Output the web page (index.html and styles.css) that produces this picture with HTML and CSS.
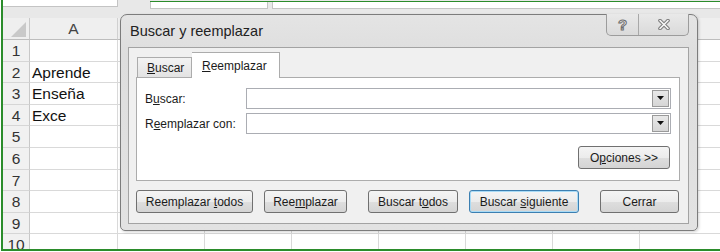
FILE: index.html
```html
<!DOCTYPE html>
<html lang="es">
<head>
    <meta charset="UTF-8">
    <title>Buscar y reemplazar</title>
    <link rel="stylesheet" href="styles.css">
</head>
<body>
    <div class="excel">
        <!-- name box / formula bar strip -->
        <div class="topbar">
            <div class="namebox"></div>
            <div class="formula-row">
                <div class="fx-box"></div>
                <div class="formula-box"></div>
            </div>
        </div>

        <!-- worksheet grid -->
        <div class="sheet">
            <div class="corner">
                <svg width="15" height="15" viewBox="0 0 15 15"><polygon points="15,0 15,15 0,15" fill="#c9c9c9"/></svg>
            </div>
            <div class="colhead">A</div><div class="colhead"></div><div class="colhead"></div><div class="colhead"></div><div class="colhead"></div><div class="colhead"></div><div class="colhead"></div><div class="colhead"></div>

            <div class="rowhead">1</div><div class="cell"></div><div class="cell"></div><div class="cell"></div><div class="cell"></div><div class="cell"></div><div class="cell"></div><div class="cell"></div><div class="cell"></div>
            <div class="rowhead">2</div><div class="cell">Aprende</div><div class="cell"></div><div class="cell"></div><div class="cell"></div><div class="cell"></div><div class="cell"></div><div class="cell"></div><div class="cell"></div>
            <div class="rowhead">3</div><div class="cell">Enseña</div><div class="cell"></div><div class="cell"></div><div class="cell"></div><div class="cell"></div><div class="cell"></div><div class="cell"></div><div class="cell"></div>
            <div class="rowhead">4</div><div class="cell">Exce</div><div class="cell"></div><div class="cell"></div><div class="cell"></div><div class="cell"></div><div class="cell"></div><div class="cell"></div><div class="cell"></div>
            <div class="rowhead">5</div><div class="cell"></div><div class="cell"></div><div class="cell"></div><div class="cell"></div><div class="cell"></div><div class="cell"></div><div class="cell"></div><div class="cell"></div>
            <div class="rowhead">6</div><div class="cell"></div><div class="cell"></div><div class="cell"></div><div class="cell"></div><div class="cell"></div><div class="cell"></div><div class="cell"></div><div class="cell"></div>
            <div class="rowhead">7</div><div class="cell"></div><div class="cell"></div><div class="cell"></div><div class="cell"></div><div class="cell"></div><div class="cell"></div><div class="cell"></div><div class="cell"></div>
            <div class="rowhead">8</div><div class="cell"></div><div class="cell"></div><div class="cell"></div><div class="cell"></div><div class="cell"></div><div class="cell"></div><div class="cell"></div><div class="cell"></div>
            <div class="rowhead">9</div><div class="cell"></div><div class="cell"></div><div class="cell"></div><div class="cell"></div><div class="cell"></div><div class="cell"></div><div class="cell"></div><div class="cell"></div>
            <div class="rowhead">10</div><div class="cell"></div><div class="cell"></div><div class="cell"></div><div class="cell"></div><div class="cell"></div><div class="cell"></div><div class="cell"></div><div class="cell"></div>
        </div>

        <!-- Buscar y reemplazar dialog -->
        <div class="dialog">
            <div class="titlebar">Buscar y reemplazar</div>
            <div class="caption-btns">
                <div class="cap-help">?</div>
                <div class="cap-close">
                    <svg width="12" height="11" viewBox="0 0 12 11">
                        <path d="M2 1.5 L10 9.5 M10 1.5 L2 9.5" stroke="#7a7a7a" stroke-width="3.6" stroke-linecap="round"/>
                        <path d="M2 1.5 L10 9.5 M10 1.5 L2 9.5" stroke="#f7f7f7" stroke-width="1.6" stroke-linecap="round"/>
                    </svg>
                </div>
            </div>

            <div class="inner">
                <div class="tabs">
                    <div class="tab"><u>B</u>uscar</div>
                    <div class="tab active"><u>R</u>eemplazar</div>
                </div>
                <div class="tab-panel">
                    <div class="field">
                        <label>B<u>u</u>scar:</label>
                        <div class="combo"><span class="drop"><svg width="7" height="5" viewBox="0 0 7 5"><polygon points="0,0 7,0 3.5,4" fill="#111"/></svg></span></div>
                    </div>
                    <div class="field">
                        <label>R<u>e</u>emplazar con:</label>
                        <div class="combo"><span class="drop"><svg width="7" height="5" viewBox="0 0 7 5"><polygon points="0,0 7,0 3.5,4" fill="#111"/></svg></span></div>
                    </div>
                    <div class="options-row">
                        <button class="btn btn-options">O<u>p</u>ciones &gt;&gt;</button>
                    </div>
                </div>
                <div class="actions">
                    <button class="btn w-todos">Reemplazar <u>t</u>odos</button>
                    <button class="btn w-reemp">Ree<u>m</u>plazar</button>
                    <button class="btn w-btodos wide-gap">Buscar t<u>o</u>dos</button>
                    <button class="btn btn-default w-sig">Buscar <u>s</u>iguiente</button>
                    <button class="btn w-cerrar wide-gap">Cerrar</button>
                </div>
            </div>
        </div>
    </div>
</body>
</html>
```

FILE: styles.css
```css
body {
    margin: 0;
    font-family: "Liberation Sans", Arial, sans-serif;
    background: #fff;
}
.excel {
    position: relative;
    width: 719px;
    height: 251px;
    margin-left: 1px;
    box-sizing: border-box;
    border-left: 2px solid #2b8c2b;
    border-bottom: 2px solid #2b8c2b;
    overflow: hidden;
    background: #fff;
}

/* top strip */
.topbar {
    display: flex;
    height: 18px;
    background: #e8e8e8;
}
.namebox {
    width: 115px;
    height: 7px;
    box-sizing: border-box;
    background: #fff;
    border-right: 1px solid #c4c4c4;
    border-bottom: 1px solid #c4c4c4;
}
.formula-row {
    flex: 1;
    display: flex;
    height: 7px;
    margin-left: 32px;
    margin-top: 1px;
    border-top: 1px solid #2b8c2b;
}
.fx-box {
    width: 118px;
    box-sizing: border-box;
    background: #fff;
    border-left: 1px solid #c4c4c4;
    border-right: 1px solid #c4c4c4;
    border-bottom: 1px solid #c4c4c4;
}
.formula-box {
    flex: 1;
    margin-left: 4px;
    background: #fff;
    border-left: 1px solid #c4c4c4;
    border-bottom: 1px solid #c4c4c4;
}

/* grid */
.sheet {
    display: grid;
    grid-template-columns: 27px 88px repeat(7, 87px);
    grid-template-rows: 22px repeat(10, 21.6px);
    font-size: 15.5px;
    color: #111;
}
.sheet > div {
    box-sizing: border-box;
    overflow: hidden;
    white-space: nowrap;
}
.corner {
    background: #efefef;
    border-right: 1px solid #c8c8c8;
    border-bottom: 1px solid #bdbdbd;
    display: flex;
    align-items: flex-end;
    justify-content: flex-end;
    padding: 0 3px 2px 0;
}
.colhead {
    background: #efefef;
    border-right: 1px solid #d0d0d0;
    border-bottom: 1px solid #bdbdbd;
    text-align: center;
    line-height: 22px;
    color: #444;
}
.rowhead {
    background: #f1f1f1;
    border-right: 1px solid #c8c8c8;
    border-bottom: 1px solid #d6d6d6;
    text-align: center;
    line-height: 21px;
    color: #333;
}
.cell {
    border-right: 1px solid #d9d9d9;
    border-bottom: 1px solid #d9d9d9;
    padding-left: 2px;
    line-height: 21px;
}

/* dialog */
.dialog {
    position: absolute;
    left: 117px;
    top: 14px;
    width: 578px;
    height: 217px;
    box-sizing: border-box;
    border: 1px solid #7c7c7c;
    border-radius: 7px 7px 5px 5px;
    background: linear-gradient(#e4e4e4, #dedede 40px, #e2e2e2);
    box-shadow: 1px 1px 3px rgba(0, 0, 0, 0.18);
    font-size: 12px;
    color: #1b1b1b;
}
.titlebar {
    height: 32px;
    line-height: 32px;
    padding-left: 9px;
    font-size: 14.5px;
    color: #222;
}
.caption-btns {
    position: absolute;
    top: -1px;
    right: 8px;
    display: flex;
    height: 22px;
    box-sizing: border-box;
    border: 1px solid #9c9c9c;
    border-top: none;
    border-radius: 0 0 5px 5px;
    background: linear-gradient(#e9e9e9, #dadada);
}
.cap-help {
    width: 31px;
    border-right: 1px solid #a8a8a8;
    text-align: center;
    font-size: 15px;
    font-weight: bold;
    line-height: 21px;
    color: #f4f4f4;
    -webkit-text-stroke: 1px #6e6e6e;
}
.cap-close {
    width: 49px;
    display: flex;
    align-items: center;
    justify-content: center;
}

.inner {
    margin: 0 8px 0 7px;
    height: 177px;
    box-sizing: border-box;
    border: 1px solid #a3a3a3;
    background: #f0f0f0;
    padding: 4px 8px 0 7px;
}
.tabs {
    display: flex;
    align-items: flex-end;
    height: 25px;
}
.tab {
    margin-left: 1px;
    width: 55px;
    height: 20px;
    box-sizing: border-box;
    border: 1px solid #acacac;
    border-bottom: none;
    background: linear-gradient(#f3f3f3, #e3e3e3);
    padding-left: 9px;
    line-height: 20px;
}
.tab.active {
    position: relative;
    z-index: 1;
    margin-left: 0;
    margin-bottom: -1px;
    width: 88px;
    height: 26px;
    border-left: none;
    background: #fff;
    padding-left: 10px;
    line-height: 26px;
}
.tab-panel {
    height: 104px;
    box-sizing: border-box;
    border: 1px solid #acacac;
    background: #fff;
    padding: 10px 8px 0 8px;
}
.field {
    display: flex;
    align-items: center;
    height: 21px;
    margin-bottom: 4px;
}
.field label {
    width: 101px;
}
.combo {
    flex: 1;
    height: 21px;
    box-sizing: border-box;
    border: 1px solid #abadb3;
    display: flex;
    justify-content: flex-end;
    padding: 1px;
}
.drop {
    width: 17px;
    box-sizing: border-box;
    border: 1px solid #9a9a9a;
    background: linear-gradient(#e8e8e8, #d6d6d6);
    display: flex;
    align-items: center;
    justify-content: center;
}
.options-row {
    display: flex;
    justify-content: flex-end;
    padding-top: 8px;
    padding-right: 1px;
}

.btn {
    height: 23px;
    box-sizing: border-box;
    border: 1px solid #707070;
    border-radius: 3px;
    background: linear-gradient(#f4f4f4, #ececec 50%, #dedede 51%, #d4d4d4);
    font-family: "Liberation Sans", Arial, sans-serif;
    font-size: 12px;
    color: #1b1b1b;
    padding: 0;
}
.btn-options {
    width: 92px;
}
.btn-default {
    border-color: #3c7fb1;
    box-shadow: inset 0 0 0 1px #a9dbf6;
}
.actions {
    display: flex;
    gap: 11px;
    margin-top: 9px;
}
.actions .wide-gap {
    margin-left: 10px;
}
.w-todos { width: 117px; }
.w-reemp { width: 83px; }
.w-btodos { width: 90px; }
.w-sig { width: 110px; }
.w-cerrar { width: 79px; }
```
